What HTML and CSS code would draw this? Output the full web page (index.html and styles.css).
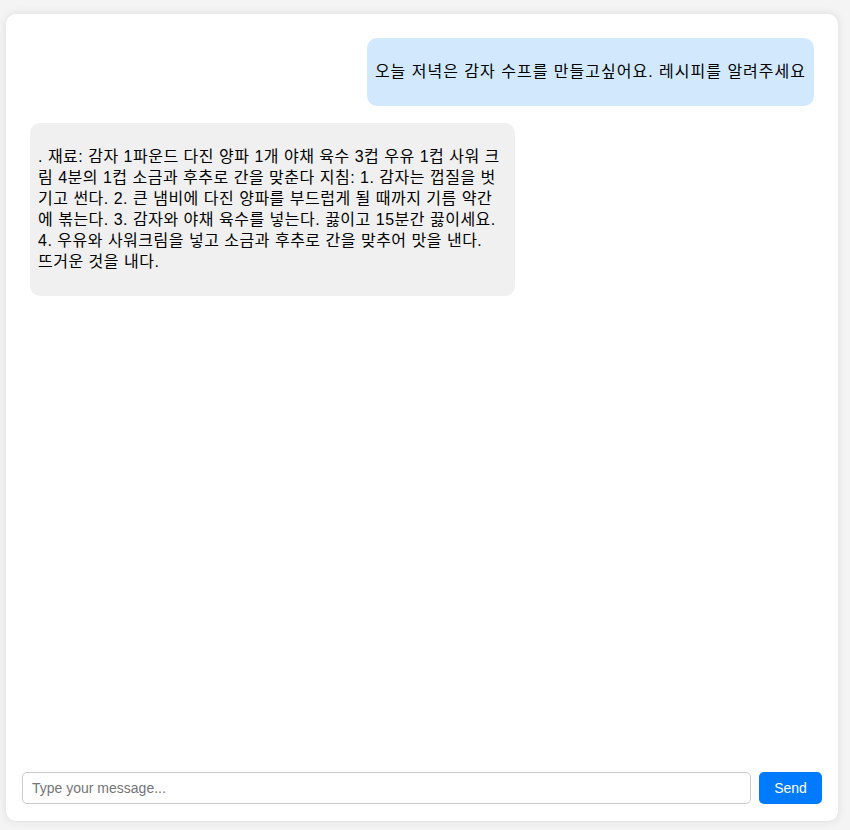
FILE: index.html
```html
<!DOCTYPE html>
<html lang="ko">
<head>
    <meta charset="UTF-8">
    <meta name="viewport" content="width=device-width, initial-scale=1.0">
    <title>Chat</title>
    <link rel="stylesheet" href="styles.css">
</head>
<body>
    <div class="chat-container">
        <div class="chat-box" id="chat-box">
            <div class="message user">
                <p>오늘 저녁은 감자 수프를 만들고싶어요. 레시피를 알려주세요</p>
            </div>
            <div class="message bot">
                <p>. 재료: 감자 1파운드 다진 양파 1개 야채 육수 3컵 우유 1컵 사워 크림 4분의 1컵 소금과 후추로 간을 맞춘다 지침: 1. 감자는 껍질을 벗기고 썬다. 2. 큰 냄비에 다진 양파를 부드럽게 될 때까지 기름 약간에 볶는다. 3. 감자와 야채 육수를 넣는다. 끓이고 15분간 끓이세요. 4. 우유와 사워크림을 넣고 소금과 후추로 간을 맞추어 맛을 낸다.<br>뜨거운 것을 내다.</p>
            </div>
        </div>
        <div class="input-area">
            <input type="text" id="user-input" placeholder="Type your message...">
            <button class="btn-send">Send</button>
        </div>
    </div>
</body>
</html>
```

FILE: styles.css
```css
* {
    margin: 0;
    padding: 0;
    box-sizing: border-box;
}
body {
    background: #f4f4f4;
    font-family: "Liberation Sans", "Noto Sans CJK KR", sans-serif;
    padding: 14px 12px 9px 6px;
}
.chat-container {
    height: 807px;
    background: #fff;
    border-radius: 10px;
    box-shadow: 0 0 10px rgba(0, 0, 0, 0.1);
    display: flex;
    flex-direction: column;
}
.chat-box {
    flex: 1;
    overflow-y: auto;
    padding: 24px 12px 0;
    display: flex;
    flex-direction: column;
}
.message {
    max-width: 60%;
    margin: 0 12px 17px;
    padding: 23px 8px 24px;
    border-radius: 10px;
    font-size: 16px;
    line-height: 21px;
    color: #000;
}
.message.user {
    align-self: flex-end;
    max-width: 100%;
    letter-spacing: 1px;
    background: #d2e9fd;
}
.message.bot {
    align-self: flex-start;
    letter-spacing: 0.5px;
    background: #f0f0f0;
}
.input-area {
    display: flex;
    gap: 8px;
    padding: 0 16px 17px;
}
#user-input {
    flex: 1;
    height: 32px;
    padding: 0 9px;
    border: 1px solid #ccc;
    border-radius: 5px;
    font-family: "Liberation Sans", sans-serif;
    font-size: 14px;
    outline: none;
}
#user-input::placeholder {
    color: #757575;
}
.btn-send {
    width: 63px;
    height: 32px;
    background: #007bff;
    color: #fff;
    border: none;
    border-radius: 5px;
    font-family: "Liberation Sans", sans-serif;
    font-size: 14px;
    cursor: pointer;
}
```
